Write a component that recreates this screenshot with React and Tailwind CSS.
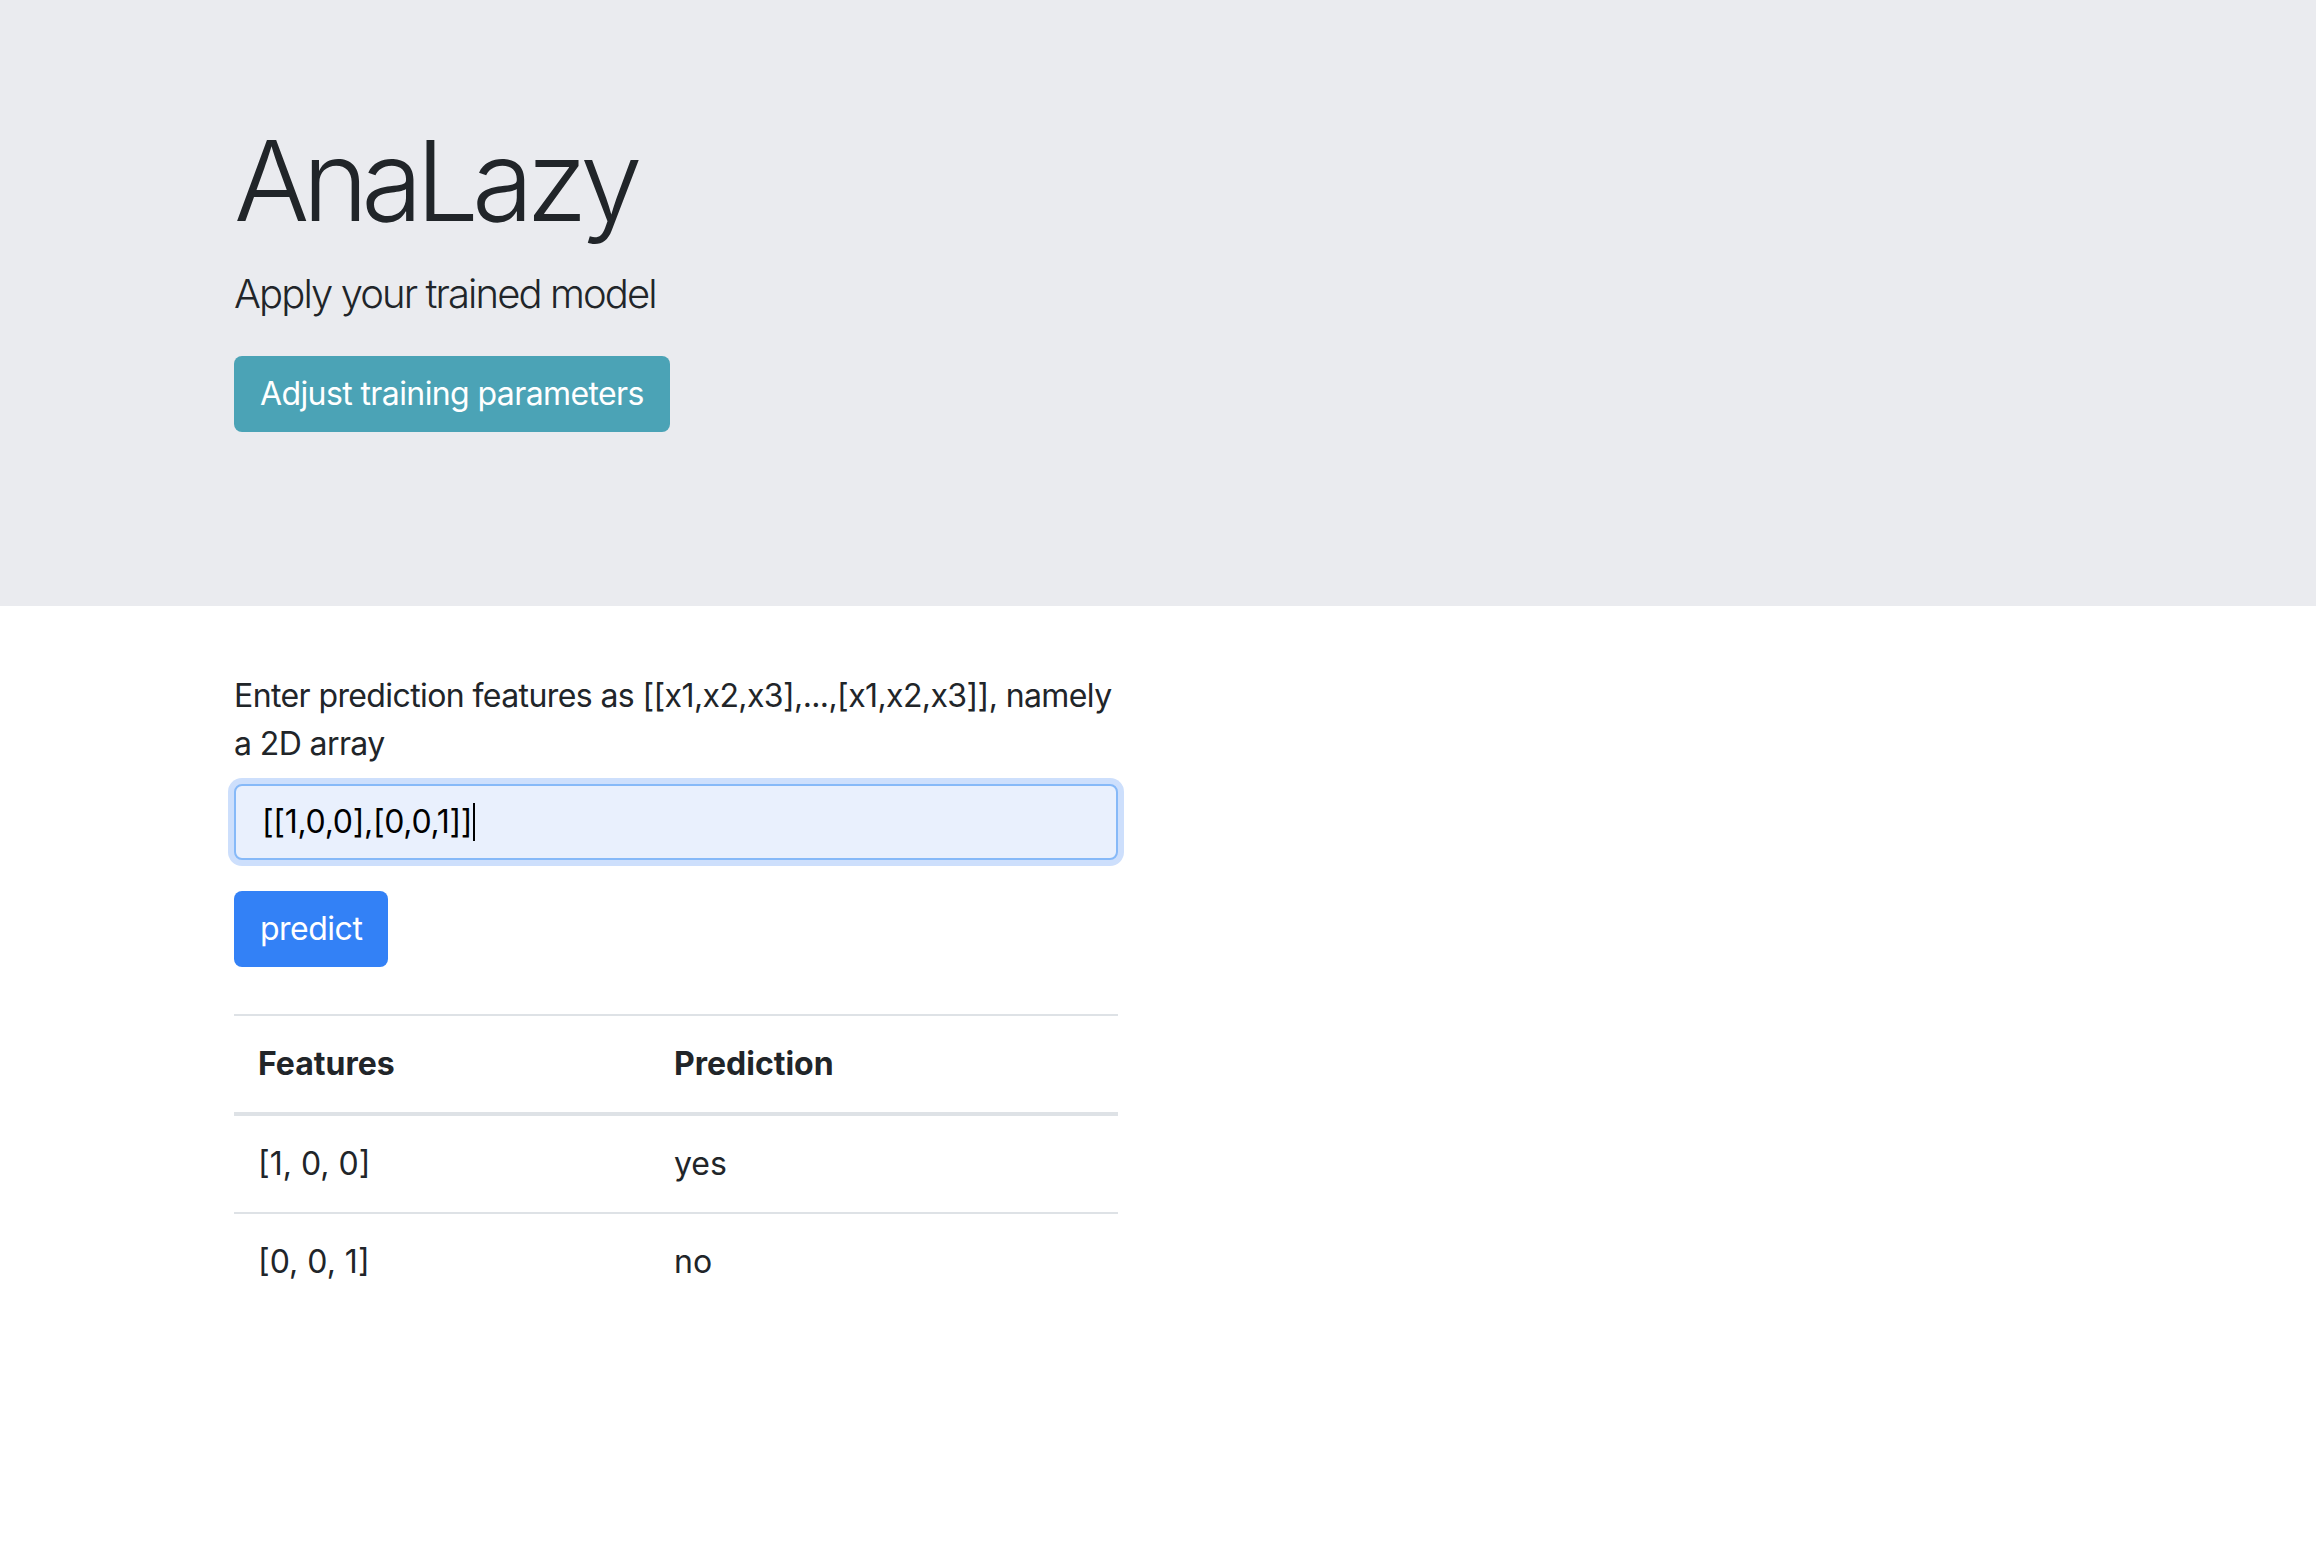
const rows = [
  { features: "[1, 0, 0]", prediction: "yes" },
  { features: "[0, 0, 1]", prediction: "no" },
];

const App = () => {
  return (
    <div className="min-h-screen bg-white text-[#212529] font-['Inter','Noto_Sans',sans-serif]">
      <div className="bg-[#eaebef] pt-[113px] pb-[174px]">
        <div className="pl-[234px]">
          <h1 className="text-[112px] font-light leading-[1.2] mb-[17px] tracking-[-7px]">AnaLazy</h1>
          <p className="text-[40px] font-light leading-[1.5] mb-[32px] tracking-[-1.9px]">Apply your trained model</p>
          <button className="h-[76px] px-[26px] rounded-[8px] bg-[#4ba3b6] text-white text-[32px] leading-[1.5] tracking-[-0.6px]">
            Adjust training parameters
          </button>
        </div>
      </div>

      <div className="pl-[234px] pt-[66px]">
        <div className="w-[884px]">
          <label className="block text-[32px] leading-[1.5] mb-[16px] tracking-[-0.6px]">
            Enter prediction features as [[x1,x2,x3],...,[x1,x2,x3]], namely a 2D array
          </label>
          <div className="h-[76px] flex items-center px-[26px] rounded-[8px] border-2 border-[#86b9f8] bg-[#e9f0fd] shadow-[0_0_0_6px_#cddffc] text-[32px] text-black tracking-[-0.3px]">
            <span>[[1,0,0],[0,0,1]]</span>
            <span className="ml-[1px] w-[2px] h-[38px] bg-black"></span>
          </div>
          <button className="mt-[31px] h-[76px] px-[26px] rounded-[8px] bg-[#3381f6] text-white text-[32px] leading-[1.5] tracking-[-0.5px]">
            predict
          </button>

          <table className="mt-[47px] w-full border-collapse text-[32px] leading-[1.5]">
            <thead>
              <tr>
                <th className="w-[416px] text-left font-bold p-[24px] border-t-2 border-b-4 border-[#dee2e6]">Features</th>
                <th className="text-left font-bold p-[24px] border-t-2 border-b-4 border-[#dee2e6]">Prediction</th>
              </tr>
            </thead>
            <tbody>
              {rows.map((row) => (
                <tr key={row.features}>
                  <td className="p-[24px] border-t-2 border-[#dee2e6]">{row.features}</td>
                  <td className="p-[24px] border-t-2 border-[#dee2e6]">{row.prediction}</td>
                </tr>
              ))}
            </tbody>
          </table>
        </div>
      </div>
    </div>
  );
};

export default App;
